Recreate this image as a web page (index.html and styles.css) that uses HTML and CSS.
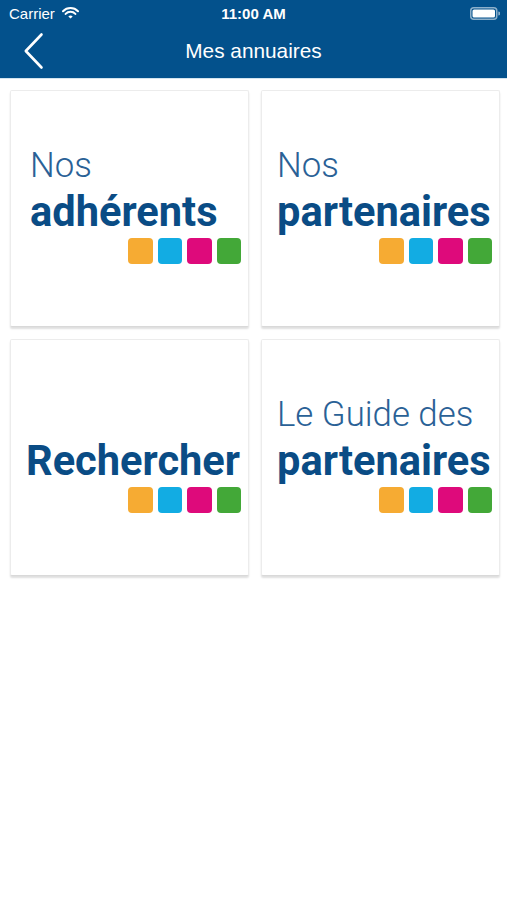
FILE: index.html
```html
<!DOCTYPE html>
<html lang="fr">
<head>
<meta charset="utf-8">
<title>Mes annuaires</title>
<link rel="stylesheet" href="styles.css">
</head>
<body>
<header class="topbar">
  <div class="status">
    <div class="status-left">
      <span class="carrier">Carrier</span>
      <svg class="wifi" width="17" height="12" viewBox="0 0 17 12">
        <path d="M1 4.2 A10.5 10.5 0 0 1 16 4.2" fill="none" stroke="#fff" stroke-width="2" stroke-linecap="round"/>
        <path d="M3.6 6.9 A6.7 6.7 0 0 1 13.4 6.9" fill="none" stroke="#fff" stroke-width="2" stroke-linecap="round"/>
        <path d="M6.3 9.5 L8.5 11.6 L10.7 9.5 A3.1 3.1 0 0 0 6.3 9.5 Z" fill="#fff"/>
      </svg>
    </div>
    <span class="time">11:00 AM</span>
    <div class="status-right">
      <svg class="battery" width="30" height="13" viewBox="0 0 30 13">
        <rect x="0.75" y="0.75" width="26" height="11.5" rx="3" fill="none" stroke="#fff" stroke-opacity="0.55" stroke-width="1.5"/>
        <rect x="2.5" y="2.5" width="22.5" height="8" rx="1.6" fill="#fff"/>
        <path d="M28.3 4.5 a1.6 1.6 0 0 1 0 4 Z" fill="#fff" fill-opacity="0.55"/>
      </svg>
    </div>
  </div>
  <nav class="navbar">
    <svg class="back" width="20" height="40" viewBox="0 0 20 40">
      <polyline points="17.5,3.5 1.8,20 17.5,36.5" fill="none" stroke="#fff" stroke-width="2.6" stroke-linecap="round" stroke-linejoin="round"/>
    </svg>
    <span class="title">Mes annuaires</span>
  </nav>
</header>
<div class="divider"></div>
<main class="grid">
  <a class="card card-first">
    <span class="light">Nos</span>
    <span class="bold">adhérents</span>
    <span class="squares"><i class="sq orange"></i><i class="sq cyan"></i><i class="sq pink"></i><i class="sq green"></i></span>
  </a>
  <a class="card">
    <span class="light">Nos</span>
    <span class="bold">partenaires</span>
    <span class="squares"><i class="sq orange"></i><i class="sq cyan"></i><i class="sq pink"></i><i class="sq green"></i></span>
  </a>
  <a class="card">
    <span class="light"></span>
    <span class="bold">Rechercher</span>
    <span class="squares"><i class="sq orange"></i><i class="sq cyan"></i><i class="sq pink"></i><i class="sq green"></i></span>
  </a>
  <a class="card">
    <span class="light">Le Guide des</span>
    <span class="bold">partenaires</span>
    <span class="squares"><i class="sq orange"></i><i class="sq cyan"></i><i class="sq pink"></i><i class="sq green"></i></span>
  </a>
</main>
</body>
</html>
```

FILE: styles.css
```css
* { box-sizing: border-box; }
html, body {
  margin: 0;
  padding: 0;
  background: #ffffff;
}
body {
  width: 507px;
  height: 900px;
  font-family: "Liberation Sans", Arial, sans-serif;
  overflow: hidden;
}
.topbar {
  background: #03518c;
  color: #fff;
  height: 78px;
}
.status {
  height: 24px;
  display: grid;
  grid-template-columns: 1fr auto 1fr;
  align-items: center;
  padding: 2px 9px 0 9px;
}
.status-left {
  display: flex;
  align-items: center;
  gap: 7px;
}
.carrier {
  font-size: 15px;
}
.wifi { margin-top: -1px; }
.time {
  font-size: 15px;
  font-weight: bold;
}
.status-right {
  display: flex;
  justify-content: flex-end;
}
.battery { margin-right: -2px; }
.navbar {
  height: 54px;
  display: flex;
  align-items: center;
  justify-content: center;
  position: relative;
}
.back {
  position: absolute;
  left: 24px;
  top: 7px;
}
.title {
  font-size: 20.8px;
  margin-top: -1px;
}
.divider {
  height: 1px;
  background: #d3e4ef;
}
.grid {
  display: grid;
  grid-template-columns: 239px 239px;
  grid-auto-rows: 237px;
  column-gap: 12px;
  row-gap: 12px;
  padding: 11px 7px 0 10px;
}
.card {
  display: flex;
  flex-direction: column;
  background: #fff;
  border: 1px solid #ececec;
  border-bottom-color: #d9d9d9;
  border-radius: 2px;
  box-shadow: 0 2px 2px rgba(0, 0, 0, 0.13);
  padding: 52px 7px 0 15px;
  font-family: Roboto, "Noto Sans", sans-serif;
  text-decoration: none;
}
.card-first { padding-left: 19px; }
.light {
  display: block;
  height: 44px;
  font-size: 34.8px;
  font-weight: 300;
  line-height: 44px;
  color: #2a6196;
  white-space: nowrap;
}
.bold {
  display: block;
  height: 51px;
  font-size: 41.6px;
  font-weight: 700;
  line-height: 50px;
  color: #0a4c85;
  white-space: nowrap;
}
.squares {
  display: flex;
  justify-content: flex-end;
  gap: 5px;
}
.sq {
  display: block;
  width: 24.5px;
  height: 26px;
  border-radius: 4px;
}
.orange { background: #f6ab33; }
.cyan { background: #12ace3; }
.pink { background: #de0a7b; }
.green { background: #43a838; }
```
